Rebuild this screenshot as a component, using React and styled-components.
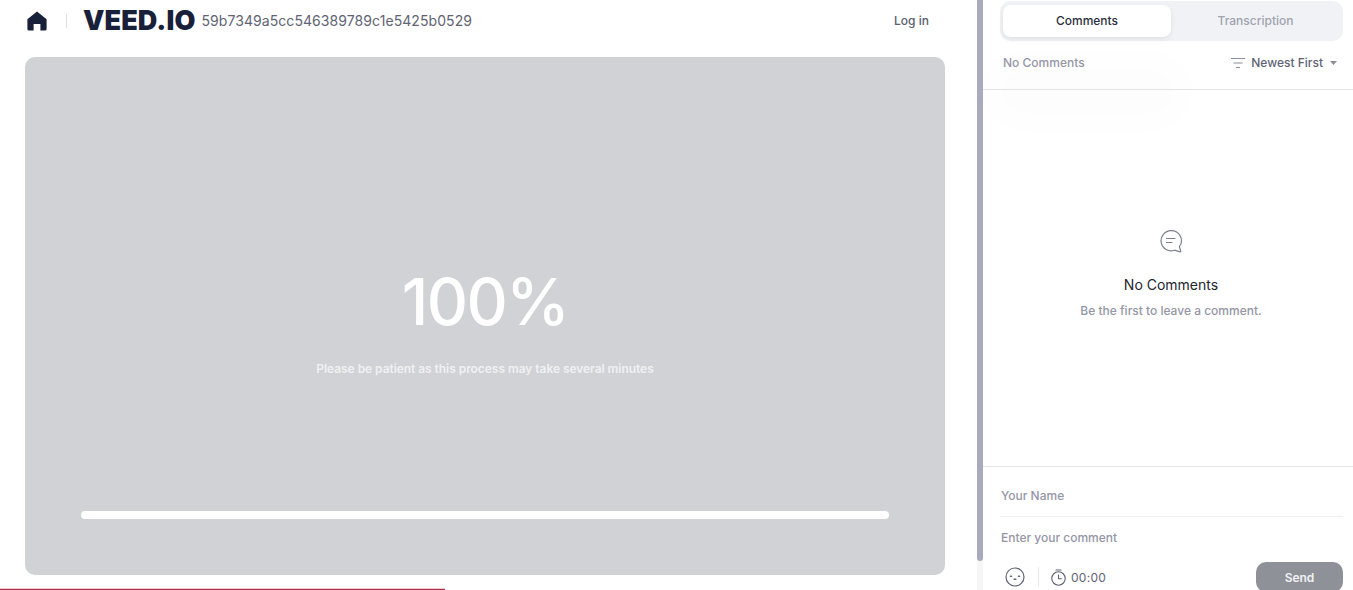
import React from 'react';
import styled, { createGlobalStyle } from 'styled-components';

const GlobalStyle = createGlobalStyle`
  html, body {
    margin: 0;
    height: 590px;
    overflow: hidden;
    background: #fff;
    font-family: Inter, "Liberation Sans", sans-serif;
  }
  * {
    box-sizing: border-box;
  }
`;

const Page = styled.div`
  display: flex;
  width: 1353px;
  height: 590px;
  overflow: hidden;
  position: relative;
`;

const Main = styled.main`
  width: 977px;
  flex: none;
  padding: 0 32px 0 25px;
`;

const Header = styled.header`
  height: 57px;
  padding: 0 16px 16px 2px;
  display: flex;
  align-items: center;
`;

const Divider = styled.span`
  width: 1px;
  height: 14px;
  background: #dfe0e4;
  margin: 0 16px 0 19px;
`;

const Logo = styled.span`
  font-size: 27px;
  font-weight: 900;
  letter-spacing: 0.1px;
  color: #19213a;
  line-height: 1;
`;

const FileName = styled.span`
  margin-left: 6px;
  font-size: 14px;
  letter-spacing: 0.07px;
  color: #5f6373;
`;

const LogIn = styled.a`
  margin-left: auto;
  font-size: 12px;
  font-weight: 500;
  color: #5a5e6e;
`;

const Preview = styled.section`
  height: 518px;
  border-radius: 10px;
  background: #d1d2d6;
  padding: 0 56px;
  display: flex;
  flex-direction: column;
  align-items: center;
  color: #fff;
`;

const Percent = styled.div`
  margin-top: 206px;
  font-size: 64px;
  line-height: 78px;
  font-weight: 500;
  letter-spacing: -1.6px;
`;

const Patience = styled.div`
  margin-top: 20px;
  font-size: 12px;
  line-height: 16px;
  font-weight: 600;
  letter-spacing: -0.05px;
  color: rgba(255, 255, 255, 0.7);
`;

const Progress = styled.div`
  margin-top: 134px;
  width: 100%;
  height: 8px;
  border-radius: 4px;
  background: #fff;
`;

const RedLine = styled.div`
  position: absolute;
  left: 0;
  bottom: 0;
  width: 445px;
  height: 2px;
  border-top: 1px solid #f3c9d1;
  background: #a83348;
`;

const ScrollTrack = styled.div`
  width: 6px;
  flex: none;
  background: #f6f6f7;
`;

const ScrollThumb = styled.div`
  height: 561px;
  border-radius: 0 0 3px 3px;
  background: #a9abbc;
`;

const Side = styled.aside`
  flex: 1;
  height: 620px;
  display: flex;
  flex-direction: column;
`;

const SideTop = styled.div`
  height: 90px;
  flex: none;
  padding: 1px 10px 0 17px;
  border-bottom: 1px solid #e4e5e9;
`;

const Tabs = styled.div`
  height: 40px;
  padding: 4px 3px;
  border-radius: 10px;
  background: #f1f2f5;
  display: flex;
`;

const Tab = styled.button`
  width: ${(props) => (props.$active ? '168px' : '169px')};
  padding: 0 0 2px;
  border: 0;
  border-radius: 8px;
  font: 500 12px Inter, "Liberation Sans", sans-serif;
  color: ${(props) => (props.$active ? '#2b2f3c' : '#a0a2b0')};
  background: ${(props) => (props.$active ? '#fff' : 'transparent')};
  box-shadow: ${(props) =>
    props.$active ? '0 2px 5px rgba(30, 32, 50, 0.08), 0 70px 40px 16px rgba(30, 32, 50, 0.012)' : 'none'};
`;

const SortRow = styled.div`
  height: 43px;
  padding: 0 6px 0 3px;
  display: flex;
  align-items: center;
  justify-content: space-between;
  font-size: 12px;
`;

const CommentCount = styled.span`
  color: #9496a6;
  font-weight: 500;
`;

const SortButton = styled.span`
  display: flex;
  align-items: center;
  color: #5f6373;
  font-weight: 500;
  svg {
    margin-right: 6px;
  }
  svg:last-child {
    margin: 0 0 0 7px;
  }
`;

const Empty = styled.div`
  flex: 1;
  padding: 139px 0 0 6px;
  display: flex;
  flex-direction: column;
  align-items: center;
`;

const EmptyTitle = styled.div`
  margin-top: 22px;
  font-size: 14px;
  line-height: 20px;
  color: #22252f;
`;

const EmptyText = styled.div`
  margin-top: 8px;
  font-size: 12px;
  line-height: 16px;
  font-weight: 500;
  color: #9496a6;
`;

const Composer = styled.div`
  height: 154px;
  flex: none;
  padding: 0 10px 0 17px;
  border-top: 1px solid #e4e5e9;
`;

const Field = styled.div`
  height: ${(props) => props.$height}px;
  padding: ${(props) => (props.$underlined ? '8px 1px 0' : '0 1px 2px')};
  display: flex;
  align-items: center;
  font-size: 12px;
  font-weight: 500;
  color: #9496a6;
  border-bottom: ${(props) => (props.$underlined ? '1px solid #eeeff1' : '0')};
`;

const Controls = styled.div`
  padding: 3px 0 0 5px;
  display: flex;
  align-items: flex-start;
`;

const ControlDivider = styled.span`
  width: 1px;
  height: 20px;
  margin: 5px 12px 0 13px;
  background: #e8e9ec;
`;

const IconButton = styled.span`
  height: 30px;
  display: flex;
  align-items: center;
`;

const Time = styled.span`
  height: 30px;
  margin-left: 5px;
  display: flex;
  align-items: center;
  font-size: 12px;
  letter-spacing: 0.3px;
  color: #5f6373;
`;

const Send = styled.button`
  margin-left: auto;
  width: 87px;
  height: 30px;
  border: 0;
  border-radius: 10px;
  background: #8f9198;
  color: #f2f2f4;
  font: 600 12px Inter, "Liberation Sans", sans-serif;
`;

const HomeIcon = () => (
  <svg width="20" height="20" viewBox="0 0 20 20">
    <path
      fill="#19213a"
      d="M10 .6 19.6 8.2V18a1.6 1.6 0 0 1-1.6 1.6h-4.6V13H6.6v6.6H2A1.6 1.6 0 0 1 .4 18V8.2Z"
    />
  </svg>
);

const SortIcon = () => (
  <svg width="14" height="10" viewBox="0 0 14 10" fill="none" stroke="#8b8d9b">
    <path d="M0 .5h14M2.5 5h9M5 9.5h4" />
  </svg>
);

const CaretIcon = () => (
  <svg width="7" height="4" viewBox="0 0 7 4">
    <path fill="#8b8d9b" d="M0 0h7L3.5 4Z" />
  </svg>
);

const BubbleIcon = () => (
  <svg width="24" height="24" viewBox="0 0 24 24" fill="none" stroke="#7d7f8c" strokeWidth="1.2" strokeLinecap="round">
    <path d="M12 1.6a10.1 10.1 0 1 0 3.6 19.6l5.4 1.6c.6.1.9-.3.7-.8l-1.3-4.3A10.1 10.1 0 0 0 12 1.6Z" />
    <path d="M7.5 9.5h8.5M7.5 13.5h5.5" />
  </svg>
);

const FaceIcon = () => (
  <svg width="20" height="20" viewBox="0 0 20 20" fill="none" stroke="#5f6373" strokeWidth="1.2" strokeLinecap="round">
    <circle cx="10" cy="10" r="9" />
    <path d="M5.5 9.2h1M13.5 9.2h1M9.2 12.2h1.6" strokeWidth="1.6" />
  </svg>
);

const TimerIcon = () => (
  <svg width="15" height="17" viewBox="0 0 15 17" fill="none" stroke="#5f6373" strokeWidth="1.1" strokeLinecap="round">
    <circle cx="7.5" cy="9.5" r="6.7" />
    <path d="M5 1h5M7.5 6v3.8h3" />
  </svg>
);

const App = () => {
  return (
    <Page>
      <GlobalStyle />
      <Main>
        <Header>
          <HomeIcon />
          <Divider />
          <Logo>VEED.IO</Logo>
          <FileName>59b7349a5cc546389789c1e5425b0529</FileName>
          <LogIn>Log in</LogIn>
        </Header>
        <Preview>
          <Percent>100%</Percent>
          <Patience>Please be patient as this process may take several minutes</Patience>
          <Progress />
        </Preview>
      </Main>
      <ScrollTrack>
        <ScrollThumb />
      </ScrollTrack>
      <Side>
        <SideTop>
          <Tabs>
            <Tab $active>Comments</Tab>
            <Tab>Transcription</Tab>
          </Tabs>
          <SortRow>
            <CommentCount>No Comments</CommentCount>
            <SortButton>
              <SortIcon />
              Newest First
              <CaretIcon />
            </SortButton>
          </SortRow>
        </SideTop>
        <Empty>
          <BubbleIcon />
          <EmptyTitle>No Comments</EmptyTitle>
          <EmptyText>Be the first to leave a comment.</EmptyText>
        </Empty>
        <Composer>
          <Field $height={50} $underlined>Your Name</Field>
          <Field $height={42}>Enter your comment</Field>
          <Controls>
            <IconButton>
              <FaceIcon />
            </IconButton>
            <ControlDivider />
            <IconButton>
              <TimerIcon />
            </IconButton>
            <Time>00:00</Time>
            <Send>Send</Send>
          </Controls>
        </Composer>
      </Side>
      <RedLine />
    </Page>
  );
};

export default App;
